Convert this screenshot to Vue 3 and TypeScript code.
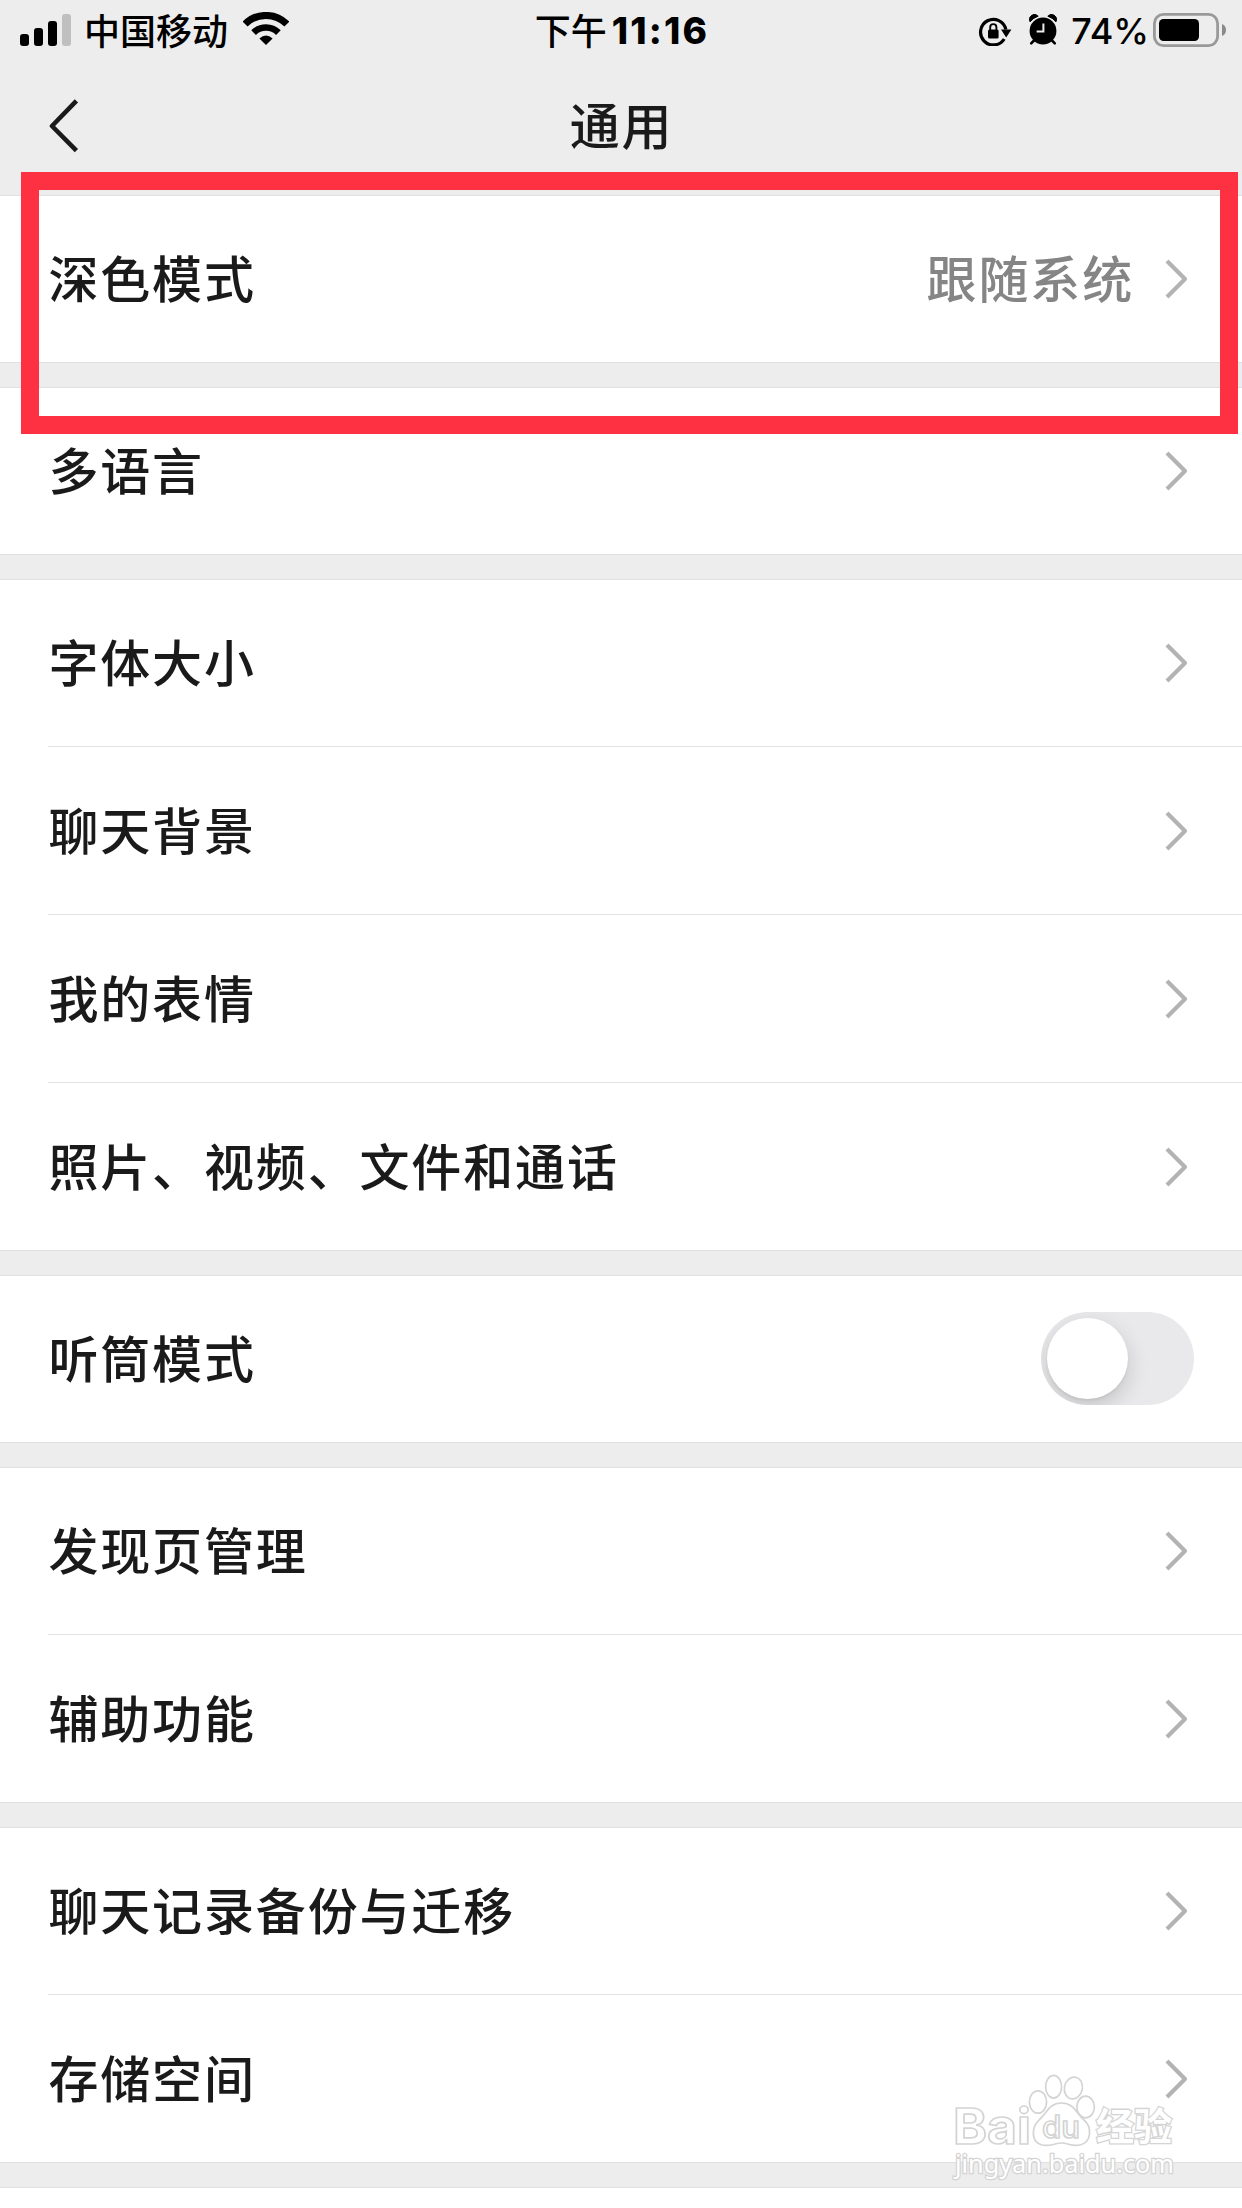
<script setup lang="ts">
interface Row {
  label: string
  value?: string
  toggle?: boolean
}

const groups: Row[][] = [
  [{ label: '深色模式', value: '跟随系统' }],
  [{ label: '多语言' }],
  [
    { label: '字体大小' },
    { label: '聊天背景' },
    { label: '我的表情' },
    { label: '照片、视频、文件和通话' },
  ],
  [{ label: '听筒模式', toggle: true }],
  [{ label: '发现页管理' }, { label: '辅助功能' }],
  [{ label: '聊天记录备份与迁移' }, { label: '存储空间' }],
]
</script>

<template>
  <div class="screen">
    <header class="header">
      <div class="status">
        <div class="side left">
          <svg class="signal" width="51" height="32" viewBox="0 0 51 32">
            <rect x="0" y="20" width="9" height="12" rx="3" />
            <rect x="14" y="14" width="9" height="18" rx="3" />
            <rect x="28" y="7" width="9" height="25" rx="3" />
            <rect x="42" y="0" width="9" height="32" rx="3" fill="#bfbfbf" />
          </svg>
          <span class="carrier">中国移动</span>
          <svg class="wifi" width="46" height="34" viewBox="0 0 46 34" fill="none" stroke="#000">
            <path d="M2.1 12.1A29.5 29.5 0 0 1 43.9 12.1" stroke-width="7" />
            <path d="M10.6 20.6A17.5 17.5 0 0 1 35.4 20.6" stroke-width="6.6" />
            <path d="M23 33L16.4 26.4Q23 20.4 29.6 26.4Z" fill="#000" stroke="none" />
          </svg>
        </div>
        <div class="clock"><span class="cjk">下午</span><b>11:16</b></div>
        <div class="side right">
          <svg width="34" height="30" viewBox="0 0 34 30">
            <path d="M26.2 23A12.8 12.8 0 1 1 27.9 13.5" fill="none" stroke="#000" stroke-width="3.2" />
            <path d="M23 13.6H33.4L28.2 21.4Z" />
            <rect x="10" y="13.6" width="10.6" height="9" rx="1.5" />
            <path d="M12.2 14V11.2a3.1 3.1 0 0 1 6.2 0V14" fill="none" stroke="#000" stroke-width="1.9" />
          </svg>
          <svg class="alarm" width="28" height="32" viewBox="0 0 28 32">
            <circle cx="14" cy="17" r="13.4" />
            <path d="M1 7.8A5 5 0 0 1 9.2 2.2Q4.2 3.8 1 7.8ZM27 7.8A5 5 0 0 0 18.8 2.2Q23.8 3.8 27 7.8Z" stroke="#000" />
            <path d="M5.5 26L2.2 29.4M22.5 26L25.8 29.4" stroke="#000" stroke-width="2.6" stroke-linecap="round" />
            <path d="M14.4 9.6V17.6H7.6" fill="none" stroke="#ededed" stroke-width="2" />
          </svg>
          <span class="percent">74%</span>
          <svg class="battery" width="73" height="34" viewBox="0 0 73 34">
            <rect x="1.4" y="1.4" width="63.2" height="31.2" rx="9" fill="none" stroke="#999" stroke-width="2.8" />
            <rect x="6" y="6" width="40" height="22" rx="4.5" />
            <path d="M69 11Q73 12.5 73 17T69 23Z" fill="#8a8a8a" />
          </svg>
        </div>
      </div>
      <div class="navbar">
        <svg class="back" width="30" height="54" viewBox="0 0 30 54">
          <path d="M27.4 1.8L3 27L27.4 51.6" fill="none" stroke="#1a1a1a" stroke-width="4.6" stroke-linejoin="round" />
        </svg>
        <h1>通用</h1>
      </div>
    </header>

    <main>
      <section v-for="(group, i) in groups" :key="i" class="group">
        <div v-for="row in group" :key="row.label" class="row">
          <span class="label">{{ row.label }}</span>
          <span v-if="row.value" class="value">{{ row.value }}</span>
          <span v-if="row.toggle" class="toggle"><i class="knob"></i></span>
          <svg v-else class="chevron" width="23" height="40" viewBox="0 0 23 40">
            <path d="M2 2L20 20L2 38" fill="none" stroke="#b3b3b3" stroke-width="4.2" stroke-linejoin="round" />
          </svg>
        </div>
      </section>
      <section class="group next"></section>
    </main>

    <div class="highlight"></div>

    <svg class="watermark" width="232" height="110" viewBox="0 0 232 110">
      <g class="mark">
        <text x="3" y="64" font-size="50" font-weight="700" textLength="78" lengthAdjust="spacingAndGlyphs">Bai</text>
        <ellipse cx="88" cy="22" rx="8.6" ry="11.2" />
        <ellipse cx="103.600" cy="6.8" rx="8" ry="11.4" />
        <ellipse cx="123.400" cy="8" rx="9" ry="11" transform="rotate(12 123.4 8)" />
        <ellipse cx="135.600" cy="27" rx="8.8" ry="10.8" />
        <path d="M111.500 23C124 23 126 33 134 40C142 47 142 62 130 65C122 67 118 63 111.500 63C105 63 100 67 92 65C81 62 81 48 89 40C97 33 99 23 111.500 23Z" />
        <text x="92" y="58" font-size="31" font-weight="500" textLength="38" lengthAdjust="spacingAndGlyphs">du</text>
        <text class="cn" x="146" y="60" font-size="38" font-weight="700" textLength="76" lengthAdjust="spacingAndGlyphs">经验</text>
        <text class="url" x="5" y="93" font-size="25.500" textLength="219" lengthAdjust="spacingAndGlyphs">jingyan.baidu.com</text>
      </g>
    </svg>
  </div>
</template>

<style>
body {
  background: #fff;
}
</style>

<style scoped>
.screen {
  position: relative;
  width: 1242px;
  height: 2208px;
  overflow: hidden;
  background: #fff;
  color: #1a1a1a;
  font-family: Inter, 'Noto Sans CJK SC', sans-serif;
}
.header {
  height: 195px;
  background: #ededed;
  border-bottom: 1px solid #e0e0e0;
}
.status {
  display: flex;
  height: 62px;
  align-items: center;
  color: #000;
  font-size: 36px;
  line-height: 44px;
}
.side {
  display: flex;
  flex: 1;
  align-items: center;
}
.left {
  padding-left: 20px;
}
.right {
  justify-content: flex-end;
  padding-right: 16px;
}
.carrier {
  margin: 0 15px 4px 13px;
  font-family: 'Noto Sans CJK SC', sans-serif;
  font-weight: 500;
}
.wifi {
  margin-bottom: 4px;
}
.signal {
  margin-bottom: 2px;
}
.clock {
  display: flex;
  align-items: center;
  gap: 5px;
  padding-right: 2px;
}
.clock .cjk {
  margin-bottom: 4px;
  font-family: 'Noto Sans CJK SC', sans-serif;
  font-weight: 500;
}
.clock b {
  font-size: 37px;
  font-weight: 800;
  letter-spacing: 2.2px;
}
.alarm {
  margin: 0 14px 3px 17px;
}
.percent {
  font-weight: 500;
}
.battery {
  margin: 0 0 2px 4px;
}
.navbar {
  display: grid;
  grid-template-columns: 200px 1fr 200px;
  align-items: center;
  height: 128px;
}
.back {
  margin-left: 49px;
}
h1 {
  margin: 0;
  padding: 0 0 6px 1px;
  font-family: 'Noto Sans CJK SC', sans-serif;
  font-size: 50px;
  font-weight: 500;
  line-height: 60px;
  letter-spacing: 1.8px;
  text-align: center;
}
main {
  background: #ededed;
}
.group {
  margin-bottom: 24px;
  padding-left: 48px;
  background: #fff;
  border-bottom: 1px solid #e0e0e0;
}
.group + .group {
  border-top: 1px solid #e0e0e0;
}
.next {
  height: 20px;
  margin-bottom: 0;
}
.row {
  display: flex;
  align-items: center;
  box-sizing: border-box;
  height: 166px;
  padding-right: 54px;
}
.row + .row {
  height: 168px;
  padding-top: 1px;
  border-top: 1px solid #e3e3e3;
}
.label,
.value {
  padding-bottom: 6px;
  font-family: 'Noto Sans CJK SC', sans-serif;
  font-size: 50px;
  font-weight: 500;
  line-height: 60px;
  letter-spacing: 1.85px;
}
.label {
  flex: 1;
  padding-left: 0.4px;
}
.value {
  margin-right: 31px;
  color: #858585;
}
.toggle {
  box-sizing: border-box;
  width: 153px;
  height: 93px;
  margin: 0 -6px 1px 0;
  padding: 6px;
  overflow: hidden;
  border-radius: 47px;
  background: #e9e9eb;
}
.knob {
  display: block;
  width: 81px;
  height: 81px;
  border-radius: 50%;
  background: #fff;
  box-shadow: 0 8px 22px rgba(0, 0, 0, 0.16), 0 2px 3px rgba(0, 0, 0, 0.06);
}
.highlight {
  position: absolute;
  top: 172px;
  left: 21px;
  box-sizing: border-box;
  width: 1217px;
  height: 262px;
  border: 18px solid #fe3142;
}
.watermark {
  position: absolute;
  top: 2080px;
  left: 950px;
  overflow: visible;
}
.mark {
  fill: #fff;
  stroke: #d4d4d4;
  stroke-width: 1.7;
  font-family: Inter, sans-serif;
}
.cn {
  font-family: 'Noto Sans CJK SC', sans-serif;
  stroke-width: 2.6;
  paint-order: stroke;
}
.url {
  font-family: 'Noto Sans', sans-serif;
  stroke-width: 2.6;
  paint-order: stroke;
}
</style>
